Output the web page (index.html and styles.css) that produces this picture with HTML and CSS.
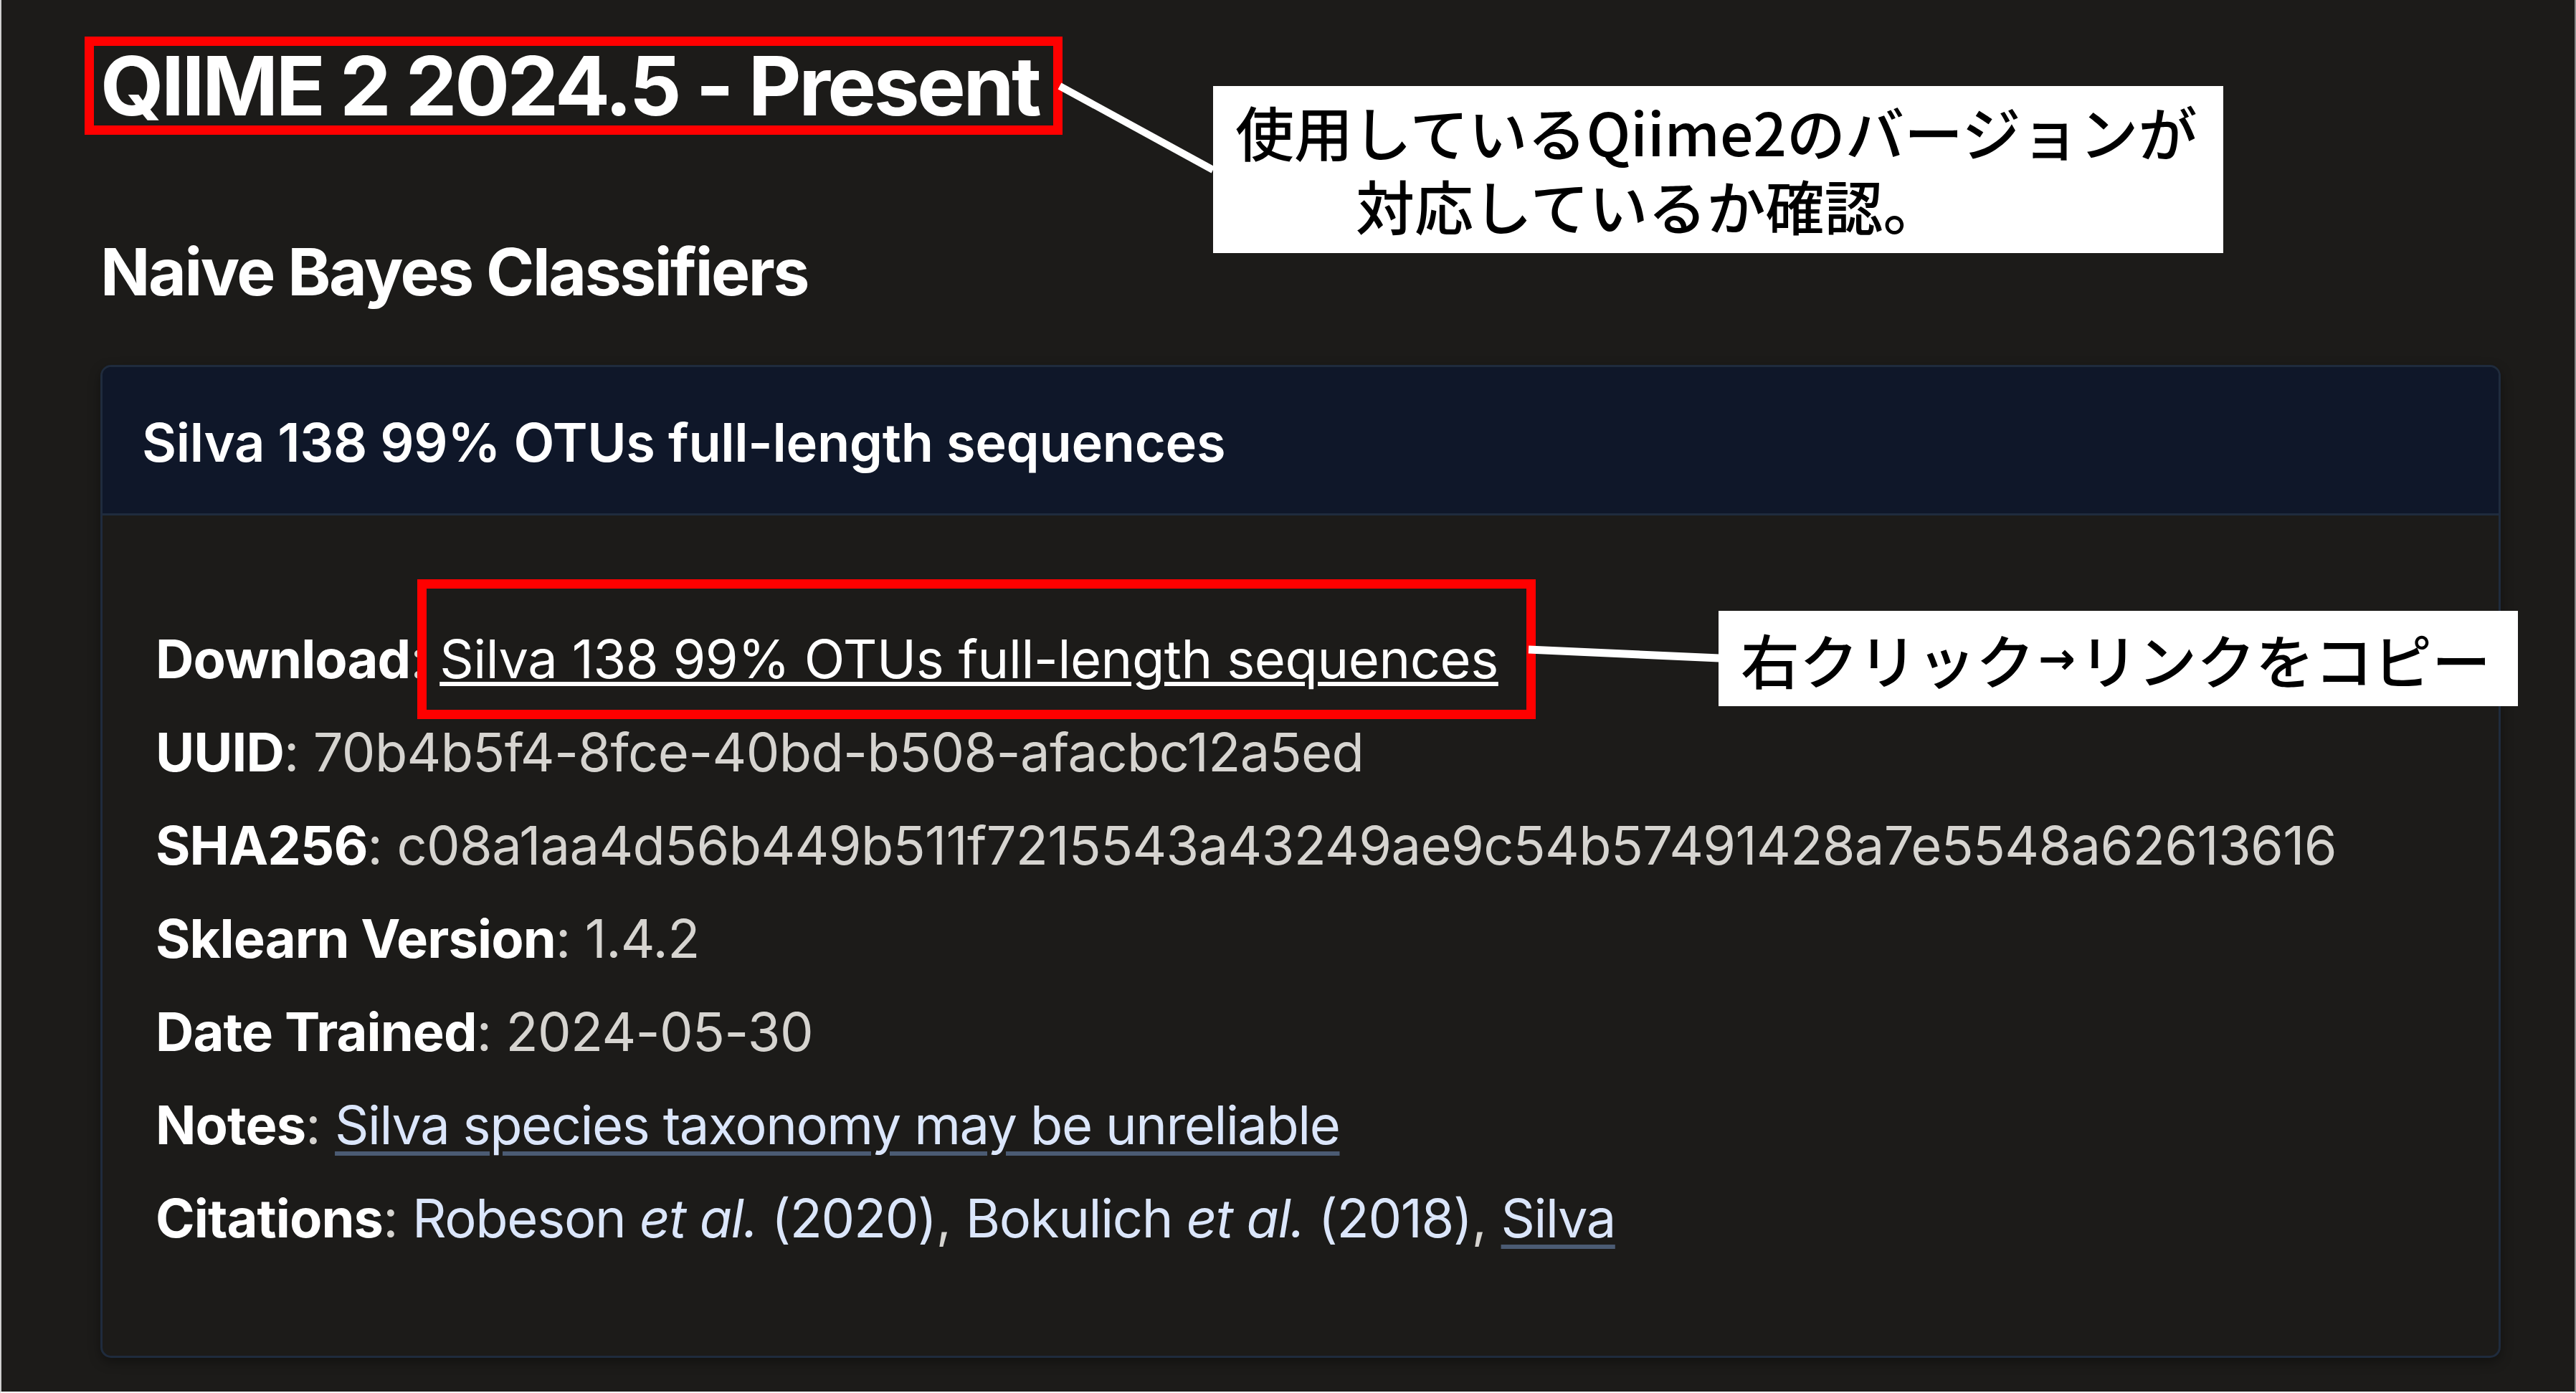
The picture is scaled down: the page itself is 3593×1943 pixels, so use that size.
FILE: index.html
```html
<!DOCTYPE html>
<html lang="ja">
<head>
<meta charset="utf-8">
<title>QIIME 2 Data Resources</title>
<link rel="stylesheet" href="styles.css">
</head>
<body>
<div class="frame">
  <main class="page">
    <h1 class="release"><span class="mark-title">QIIME 2 2024.5 - Present</span></h1>
    <h2 class="section">Naive Bayes Classifiers</h2>
    <section class="card">
      <header class="card-head">Silva 138 99% OTUs full-length sequences</header>
      <div class="card-body">
        <div class="row"><b>Download</b>: <a class="dl-link">Silva 138 99% OTUs full-length sequences</a></div>
        <div class="row"><b>UUID</b>: 70b4b5f4-8fce-40bd-b508-afacbc12a5ed</div>
        <div class="row"><b>SHA256</b>: c08a1aa4d56b449b511f7215543a43249ae9c54b57491428a7e5548a62613616</div>
        <div class="row"><b>Sklearn Version</b>: 1.4.2</div>
        <div class="row"><b>Date Trained</b>: 2024-05-30</div>
        <div class="row"><b>Notes</b>: <a class="ulink">Silva species taxonomy may be unreliable</a></div>
        <div class="row"><b>Citations</b>: <a class="cite">Robeson <i>et al.</i> (2020)</a>, <a class="cite">Bokulich <i>et al.</i> (2018)</a>, <a class="ulink">Silva</a></div>
      </div>
    </section>
  </main>

  <svg class="connectors" width="3593" height="1943" viewBox="0 0 3593 1943" aria-hidden="true">
    <line x1="1478" y1="120" x2="1692" y2="237" stroke="#ffffff" stroke-width="10"/>
    <line x1="2132" y1="906" x2="2398" y2="918" stroke="#ffffff" stroke-width="11"/>
  </svg>

  <div class="callout callout-version">
    <span class="cl-line">使用しているQiime2のバージョンが</span>
    <span class="cl-line cl-indent">対応しているか確認。</span>
  </div>
  <div class="callout callout-copy">右クリック<span class="arrow">→</span>リンクをコピー</div>
</div>
</body>
</html>
```

FILE: styles.css
```css
* { box-sizing: border-box; }

html, body {
  margin: 0;
  padding: 0;
  background: #ffffff;
}

.frame {
  position: relative;
  width: 3593px;
  height: 1943px;
  overflow: hidden;
  background: #1c1b19;
  border-left: 2px solid #cfcfcf;
  border-right: 2px solid #8a8a8a;
  border-bottom: 2px solid #ffffff;
  font-family: Inter, "Noto Sans", "Liberation Sans", sans-serif;
  color: #ffffff;
}

.page {
  padding: 64px 103px 0 138px;
}

.release {
  margin: 0;
  font-size: 114px;
  line-height: 112px;
  font-weight: 700;
  letter-spacing: -3.5px;
  color: #ffffff;
}

.mark-title {
  position: relative;
}

.mark-title::after {
  content: "";
  position: absolute;
  left: -22px;
  right: -33px;
  top: 0;
  bottom: 0;
  border: 13px solid #ff0000;
}

.section {
  margin: 149px 0 75px;
  font-size: 91px;
  line-height: 109px;
  font-weight: 700;
  letter-spacing: -2.4px;
  color: #ffffff;
}

.card {
  border: 3px solid #1f2b3d;
  border-radius: 15px;
  box-shadow: 0 6px 16px rgba(0, 0, 0, 0.35);
}

.card-head {
  background: #0f1729;
  border-bottom: 3px solid #1f2b3d;
  border-radius: 12px 12px 0 0;
  padding: 40px 55px 34px;
  font-size: 74px;
  line-height: 130px;
  font-weight: 600;
  letter-spacing: -0.35px;
  color: #ffffff;
}

.card-body {
  padding: 135px 74px 127px;
  font-size: 74px;
  line-height: 130px;
  font-weight: 400;
  letter-spacing: -0.65px;
  color: #d6d4d0;
}

.row b {
  font-weight: 700;
  letter-spacing: -0.9px;
  color: #ffffff;
}

.dl-link {
  position: relative;
  color: #ffffff;
  letter-spacing: -0.45px;
  text-decoration: underline;
  text-decoration-color: #ffffff;
  text-decoration-thickness: 6px;
  text-underline-offset: 5px;
}

.dl-link::after {
  content: "";
  position: absolute;
  left: -31px;
  right: -52px;
  top: -66px;
  bottom: -39px;
  border: 13px solid #ff0000;
}

.ulink {
  color: #dbe6fb;
  letter-spacing: -1.45px;
  text-decoration: underline;
  text-decoration-color: #4b5b73;
  text-decoration-thickness: 6px;
  text-underline-offset: 10px;
}

.cite {
  color: #dbe6fb;
  letter-spacing: -1.3px;
  text-decoration: none;
}

.cite i {
  font-style: italic;
}

.connectors {
  position: absolute;
  left: -2px;
  top: 0;
  pointer-events: none;
}

.callout {
  position: absolute;
  background: #ffffff;
  color: #000000;
  font-family: "Noto Sans CJK JP", "Noto Sans", sans-serif;
  font-size: 82px;
  font-weight: 500;
}

.callout-version {
  left: 1690px;
  top: 120px;
  width: 1409px;
  height: 233px;
  padding: 11px 0 0 31px;
  line-height: 103px;
}

.cl-line {
  display: block;
  white-space: nowrap;
}

.cl-indent {
  padding-left: 168px;
}

.callout-copy {
  left: 2395px;
  top: 852px;
  width: 1115px;
  height: 133px;
  display: flex;
  align-items: center;
  padding-left: 31px;
  line-height: 1;
  white-space: nowrap;
}

.arrow {
  font-family: "DejaVu Sans", sans-serif;
  font-size: 62px;
  font-weight: 700;
  margin: 0 5px;
}
```
